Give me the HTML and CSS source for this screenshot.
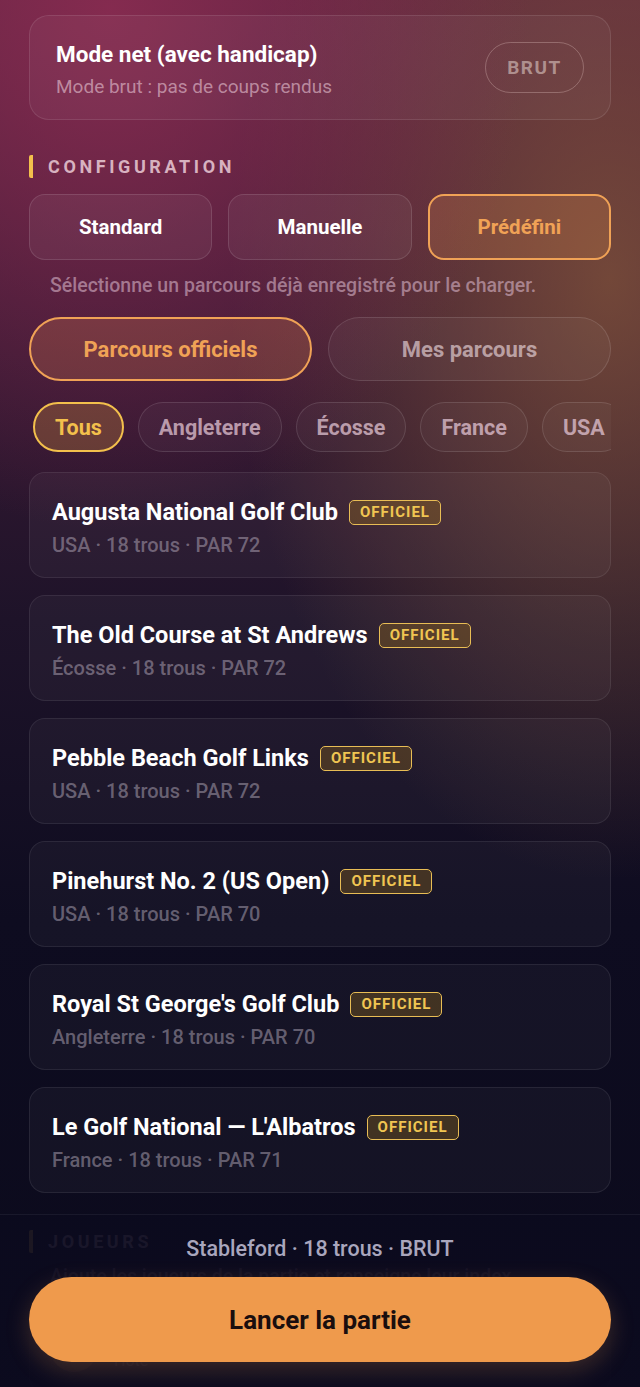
FILE: index.html
```html
<!DOCTYPE html>
<html lang="fr">
<head>
<meta charset="utf-8">
<title>Nouvelle partie</title>
<link rel="stylesheet" href="styles.css">
</head>
<body>
<main class="page">
  <section class="mode-card">
    <div class="mode-text">
      <div class="mode-title">Mode net (avec handicap)</div>
      <div class="mode-sub">Mode brut : pas de coups rendus</div>
    </div>
    <div class="mode-pill">BRUT</div>
  </section>

  <h2 class="section-title">CONFIGURATION</h2>

  <div class="segments">
    <button class="seg">Standard</button>
    <button class="seg">Manuelle</button>
    <button class="seg seg-active">Prédéfini</button>
  </div>

  <p class="helper">Sélectionne un parcours déjà enregistré pour le charger.</p>

  <div class="toggles">
    <button class="toggle toggle-active">Parcours officiels</button>
    <button class="toggle">Mes parcours</button>
  </div>

  <div class="chips">
    <span class="chip chip-active">Tous</span>
    <span class="chip">Angleterre</span>
    <span class="chip">Écosse</span>
    <span class="chip">France</span>
    <span class="chip">USA</span>
  </div>

  <div class="courses">
    <div class="course">
      <div class="course-head"><span class="course-name">Augusta National Golf Club</span><span class="badge">OFFICIEL</span></div>
      <div class="course-meta">USA · 18 trous · PAR 72</div>
    </div>
    <div class="course">
      <div class="course-head"><span class="course-name">The Old Course at St Andrews</span><span class="badge">OFFICIEL</span></div>
      <div class="course-meta">Écosse · 18 trous · PAR 72</div>
    </div>
    <div class="course">
      <div class="course-head"><span class="course-name">Pebble Beach Golf Links</span><span class="badge">OFFICIEL</span></div>
      <div class="course-meta">USA · 18 trous · PAR 72</div>
    </div>
    <div class="course">
      <div class="course-head"><span class="course-name">Pinehurst No. 2 (US Open)</span><span class="badge">OFFICIEL</span></div>
      <div class="course-meta">USA · 18 trous · PAR 70</div>
    </div>
    <div class="course">
      <div class="course-head"><span class="course-name">Royal St George's Golf Club</span><span class="badge">OFFICIEL</span></div>
      <div class="course-meta">Angleterre · 18 trous · PAR 70</div>
    </div>
    <div class="course">
      <div class="course-head"><span class="course-name">Le Golf National — L'Albatros</span><span class="badge">OFFICIEL</span></div>
      <div class="course-meta">France · 18 trous · PAR 71</div>
    </div>
  </div>

  <h2 class="section-title section-title-players">JOUEURS</h2>
  <p class="helper helper-players">Ajoute les joueurs de la partie et renseigne leur index.</p>
  <div class="player">
    <div class="avatar"></div>
    <div class="player-text">
      <div class="player-name">Stéphane</div>
      <div class="player-role">Hôte</div>
    </div>
  </div>
</main>

<footer class="footer">
  <div class="summary">Stableford · 18 trous · BRUT</div>
  <button class="launch">Lancer la partie</button>
</footer>
</body>
</html>
```

FILE: styles.css
```css
* { box-sizing: border-box; }

html, body {
  margin: 0;
  padding: 0;
}

body {
  width: 640px;
  height: 1387px;
  overflow: hidden;
  font-family: Roboto, "Noto Sans", "Liberation Sans", sans-serif;
  color: #fff;
  background:
    radial-gradient(ellipse 420px 520px at 110px 10px, rgba(140, 44, 82, 0.85), rgba(140, 44, 82, 0) 100%),
    radial-gradient(ellipse 380px 600px at 610px 280px, rgba(132, 86, 58, 0.75), rgba(132, 86, 58, 0) 100%),
    linear-gradient(180deg, #5a2440 0px, #3c1a35 300px, #1e1329 620px, #0e0c20 920px, #0b0a1c 1387px);
  position: relative;
}

.page {
  padding: 15px 29px 0;
}

/* Mode card */
.mode-card {
  height: 105px;
  border: 1px solid rgba(255, 255, 255, 0.1);
  border-radius: 20px;
  background: rgba(255, 255, 255, 0.04);
  display: flex;
  align-items: center;
  justify-content: space-between;
  padding: 0 26px;
}

.mode-text {
  align-self: flex-start;
  padding-top: 24px;
}

.mode-title {
  font-size: 22.5px;
  font-weight: 700;
  color: #fff;
  line-height: 28px;
}

.mode-sub {
  margin-top: 7px;
  font-size: 19px;
  color: rgba(225, 190, 205, 0.65);
  line-height: 24px;
}

.mode-pill {
  width: 99px;
  height: 51px;
  border-radius: 26px;
  border: 1.5px solid rgba(220, 190, 185, 0.35);
  display: flex;
  align-items: center;
  justify-content: center;
  font-size: 19px;
  font-weight: 700;
  letter-spacing: 1.5px;
  color: rgba(220, 200, 195, 0.6);
}

/* Section title */
.section-title {
  margin: 35px 0 0;
  height: 23px;
  display: flex;
  align-items: center;
  font-size: 18px;
  font-weight: 700;
  letter-spacing: 3.6px;
  color: rgba(235, 205, 215, 0.85);
  border-left: 4px solid #f3c04c;
  border-radius: 2px;
  padding-left: 15px;
}

.section-title-players {
  margin-top: 37px;
}

/* Segments */
.segments {
  margin-top: 16px;
  display: grid;
  grid-template-columns: repeat(3, 1fr);
  gap: 16px;
}

.seg {
  height: 66px;
  border-radius: 16px;
  border: 1px solid rgba(255, 255, 255, 0.12);
  background: rgba(255, 255, 255, 0.05);
  color: #fff;
  font-family: inherit;
  font-size: 20.5px;
  font-weight: 700;
}

.seg-active {
  border: 2px solid #f0a256;
  background: rgba(240, 150, 80, 0.2);
  color: #f0a256;
}

.helper {
  margin: 14px 0 0;
  padding-left: 21px;
  font-size: 19.5px;
  font-weight: 500;
  line-height: 24px;
  color: rgba(215, 180, 200, 0.6);
  white-space: nowrap;
}

/* Toggles */
.toggles {
  margin-top: 19px;
  display: grid;
  grid-template-columns: 1fr 1fr;
  gap: 16px;
}

.toggle {
  height: 64px;
  border-radius: 32px;
  border: 1px solid rgba(255, 255, 255, 0.12);
  background: rgba(255, 255, 255, 0.04);
  color: rgba(225, 205, 210, 0.7);
  font-family: inherit;
  font-size: 22px;
  font-weight: 700;
}

.toggle-active {
  border: 2px solid #f0a256;
  background: rgba(240, 140, 80, 0.22);
  color: #f0a256;
}

/* Chips */
.chips {
  margin-top: 21px;
  padding-left: 4px;
  display: flex;
  gap: 14px;
  overflow: hidden;
  white-space: nowrap;
}

.chip {
  flex: none;
  height: 50px;
  padding: 0 20px;
  border-radius: 25px;
  border: 1px solid rgba(255, 255, 255, 0.12);
  background: rgba(255, 255, 255, 0.03);
  display: flex;
  align-items: center;
  font-size: 21.5px;
  font-weight: 700;
  color: rgba(225, 195, 210, 0.75);
}

.chip-active {
  border: 2px solid #f3c04c;
  background: rgba(220, 150, 60, 0.28);
  color: #f3c04c;
}

/* Courses */
.courses {
  margin-top: 20px;
  display: flex;
  flex-direction: column;
  gap: 17px;
}

.course {
  height: 106px;
  border-radius: 16px;
  border: 1px solid rgba(255, 255, 255, 0.08);
  background: rgba(255, 255, 255, 0.035);
  padding: 25px 22px 0;
}

.course-head {
  display: flex;
  align-items: center;
  gap: 11px;
  height: 28px;
}

.course-name {
  font-size: 23.5px;
  font-weight: 700;
  color: #fff;
  white-space: nowrap;
}

.badge {
  height: 25px;
  padding: 0 10px;
  border-radius: 5px;
  border: 1.5px solid #e8bd55;
  background: rgba(150, 110, 30, 0.35);
  display: flex;
  align-items: center;
  font-size: 15px;
  font-weight: 700;
  letter-spacing: 1px;
  color: #f0c552;
}

.course-meta {
  margin-top: 7px;
  font-size: 20px;
  font-weight: 500;
  line-height: 24px;
  color: rgba(200, 190, 205, 0.45);
}

/* Players section, mostly hidden under the footer */
.helper-players {
  margin-top: 12px;
}

.player {
  margin-top: 14px;
  height: 90px;
  border-radius: 16px;
  border: 1px solid rgba(255, 255, 255, 0.08);
  background: rgba(255, 255, 255, 0.035);
  display: flex;
  align-items: center;
  gap: 16px;
  padding: 0 20px;
}

.avatar {
  width: 48px;
  height: 48px;
  border-radius: 50%;
  background: rgba(240, 160, 80, 0.4);
}

.player-name {
  font-size: 20px;
  font-weight: 700;
}

.player-role {
  font-size: 16px;
  color: rgba(200, 190, 205, 0.6);
}

/* Footer overlay */
.footer {
  position: absolute;
  left: 0;
  right: 0;
  bottom: 0;
  height: 173px;
  border-top: 1px solid rgba(255, 255, 255, 0.06);
  background: linear-gradient(180deg, rgba(11, 10, 30, 0.92) 0%, rgba(11, 10, 30, 0.94) 100%);
  display: flex;
  flex-direction: column;
  align-items: center;
  padding: 0 29px;
}

.summary {
  margin-top: 21px;
  height: 26px;
  font-size: 21.5px;
  font-weight: 500;
  color: #a9a6bd;
  line-height: 26px;
}

.launch {
  margin-top: 15px;
  width: 100%;
  height: 85px;
  border: none;
  border-radius: 43px;
  background: #ef9a4c;
  color: #1a0e0e;
  font-family: inherit;
  font-size: 26px;
  font-weight: 700;
  box-shadow: 0 8px 24px rgba(239, 154, 76, 0.22);
}
```
